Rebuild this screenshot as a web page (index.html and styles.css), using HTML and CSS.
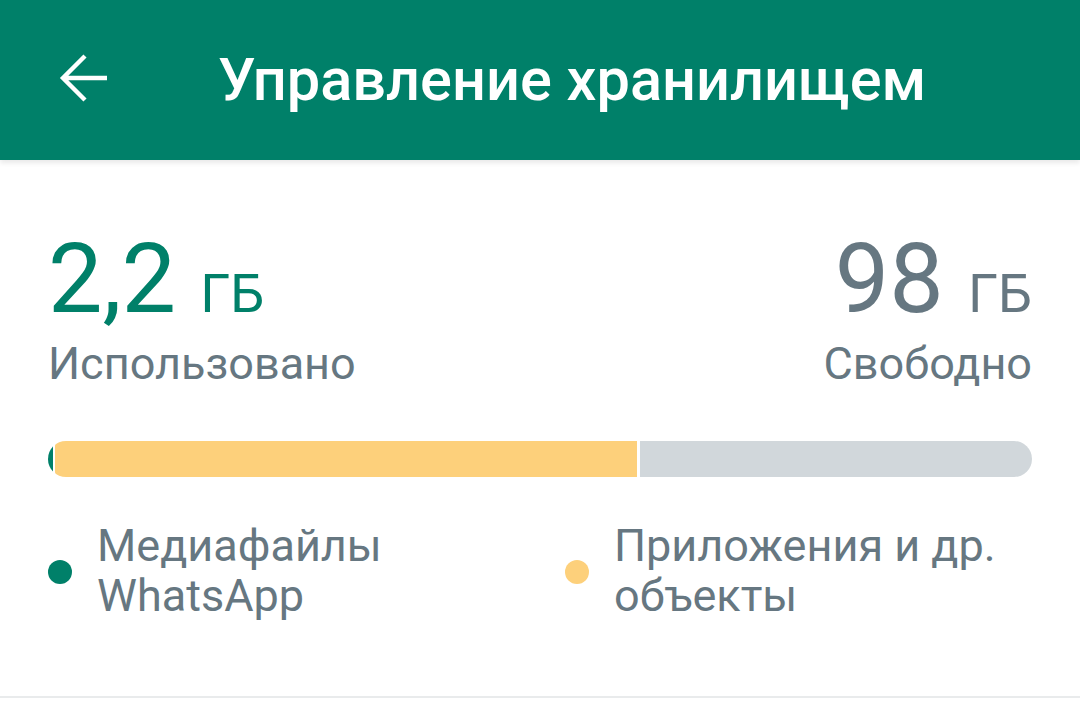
FILE: index.html
```html
<!DOCTYPE html>
<html lang="ru">
<head>
<meta charset="utf-8">
<title>Управление хранилищем</title>
<link rel="stylesheet" href="styles.css">
</head>
<body>
<header class="appbar">
  <button class="back" aria-label="Назад">
    <svg width="72" height="72" viewBox="0 0 72 72" aria-hidden="true">
      <path d="M18 34 H62 M40 12 L18 34 L40 56" fill="none" stroke="#fff" stroke-width="4.4" stroke-linecap="butt" stroke-linejoin="miter"/>
    </svg>
  </button>
  <h1 class="title">Управление хранилищем</h1>
</header>
<main class="content">
  <section class="stats">
    <div class="stat">
      <div class="amount used">2,2 <span class="unit">ГБ</span></div>
      <div class="label">Использовано</div>
    </div>
    <div class="stat right">
      <div class="amount free">98 <span class="unit">ГБ</span></div>
      <div class="label">Свободно</div>
    </div>
  </section>
  <div class="bar">
    <div class="seg media" style="width:5px"></div>
    <div class="seg apps" style="width:582px"></div>
    <div class="seg rest"></div>
  </div>
  <ul class="legend">
    <li class="item"><span class="dot green"></span><span class="text">Медиафайлы<br>WhatsApp</span></li>
    <li class="item"><span class="dot yellow"></span><span class="text">Приложения и др.<br>объекты</span></li>
  </ul>
</main>
<div class="divider"></div>
</body>
</html>
```
FILE: styles.css
```css
* { box-sizing: border-box; }
html, body {
  margin: 0;
  padding: 0;
  background: #fff;
  font-family: Roboto, "Noto Sans", "Liberation Sans", sans-serif;
  width: 1080px;
  height: 720px;
  overflow: hidden;
}
.appbar {
  height: 160px;
  background: #008069;
  display: flex;
  align-items: center;
  box-shadow: 0 3px 5px rgba(0, 0, 0, 0.09);
  position: relative;
  z-index: 1;
}
.back {
  margin: 0 0 0 45px;
  padding: 0;
  border: 0;
  background: transparent;
  width: 72px;
  height: 72px;
  display: flex;
}
.title {
  margin: 0 0 0 101px;
  color: #fff;
  font-size: 59.5px;
  font-weight: 500;
  line-height: 160px;
  letter-spacing: 0;
}
.content {
  padding: 0 48px;
}
.stats {
  display: flex;
  justify-content: space-between;
  padding-top: 63px;
}
.stat.right { text-align: right; }
.amount {
  font-size: 97px;
  line-height: 112px;
  font-weight: 400;
}
.amount.used { color: #008069; }
.amount.free { color: #667781; }
.unit {
  font-size: 54px;
  line-height: 1;
}
.label {
  margin-top: 4px;
  font-size: 45px;
  line-height: 50px;
  color: #667781;
}
.bar {
  margin-top: 52px;
  height: 36px;
  border-radius: 18px;
  overflow: hidden;
  display: flex;
  background: #fff;
}
.seg { height: 100%; }
.seg.media { background: #008069; margin-right: 2px; }
.seg.apps { background: #fdd07b; border-radius: 5px 0 0 5px; margin-right: 3px; }
.seg.rest { flex: 1; background: #d1d7db; }
.legend {
  list-style: none;
  margin: 44px 0 0;
  padding: 0;
  display: grid;
  grid-template-columns: 517px 1fr;
}
.item {
  display: flex;
  align-items: center;
  gap: 25px;
}
.dot {
  width: 24px;
  height: 24px;
  border-radius: 50%;
  flex: none;
  margin-top: 2px;
}
.dot.green { background: #008069; }
.dot.yellow { background: #fdd07b; }
.text {
  font-size: 45px;
  line-height: 50px;
  color: #667781;
}
.divider {
  position: absolute;
  left: 0;
  right: 0;
  top: 696px;
  height: 2px;
  background: #e9ebec;
}
```
